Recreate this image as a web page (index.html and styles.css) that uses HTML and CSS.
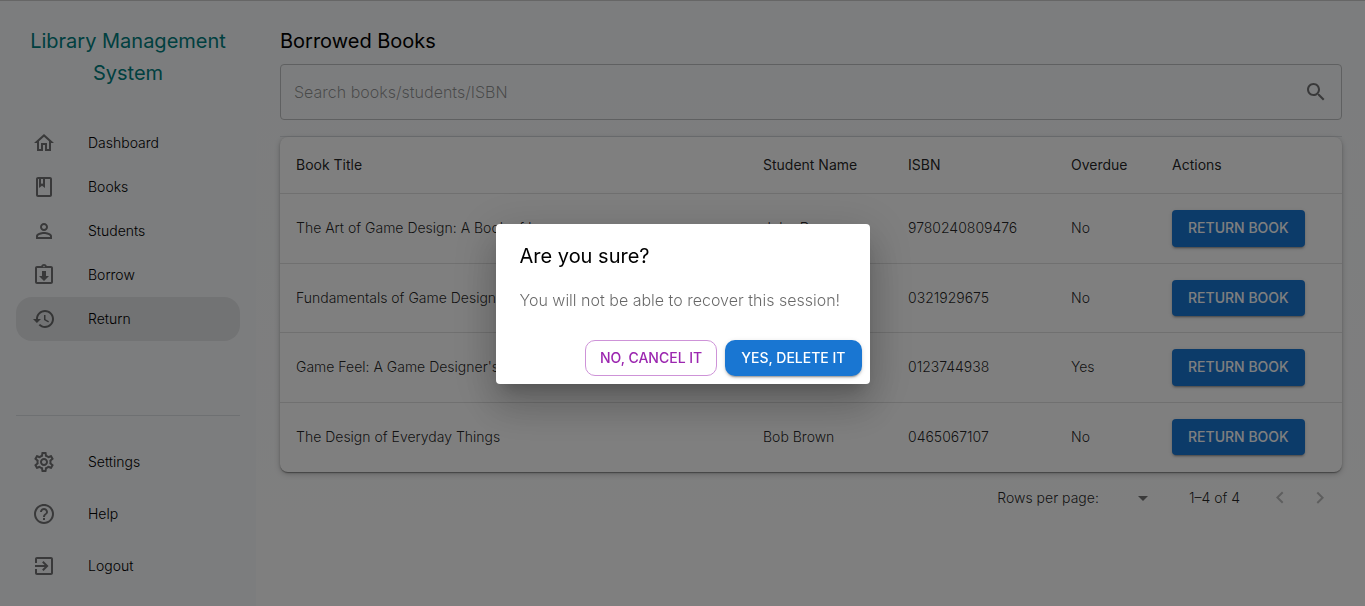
FILE: index.html
```html
<!DOCTYPE html>
<html lang="en">
<head>
<meta charset="utf-8">
<meta name="viewport" content="width=device-width, initial-scale=1">
<title>Library Management System</title>
<link rel="stylesheet" href="styles.css">
</head>
<body>
<div class="app">
  <aside class="sidebar">
    <h1 class="brand">Library Management System</h1>
    <nav class="nav" aria-label="Main">
      <a class="nav-item" href="#dashboard"><svg class="icon" viewBox="0 0 24 24" aria-hidden="true"><path d="M12 5.69l5 4.5V18h-2v-6H9v6H7v-7.81l5-4.5M12 3L2 12h3v8h6v-6h2v6h6v-8h3L12 3z"/></svg>Dashboard</a>
      <a class="nav-item" href="#books"><svg class="icon" viewBox="0 0 24 24" aria-hidden="true"><path d="M18 2H6c-1.1 0-2 .9-2 2v16c0 1.1.9 2 2 2h12c1.1 0 2-.9 2-2V4c0-1.1-.9-2-2-2zM9 4h2v5l-1-.75L9 9V4zm9 16H6V4h1v9l3-2.25L13 13V4h5v16z"/></svg>Books</a>
      <a class="nav-item" href="#students"><svg class="icon" viewBox="0 0 24 24" aria-hidden="true"><path d="M12 6c1.1 0 2 .9 2 2s-.9 2-2 2-2-.9-2-2 .9-2 2-2m0 9c2.7 0 5.8 1.29 6 2v1H6v-.99c.2-.72 3.3-2.01 6-2.01m0-11C9.79 4 8 5.79 8 8s1.79 4 4 4 4-1.79 4-4-1.79-4-4-4zm0 9c-2.67 0-8 1.34-8 4v3h16v-3c0-2.66-5.33-4-8-4z"/></svg>Students</a>
      <a class="nav-item" href="#borrow"><svg class="icon" viewBox="0 0 24 24" aria-hidden="true"><path d="M19 3h-4.18C14.4 1.84 13.3 1 12 1s-2.4.84-2.82 2H5c-1.1 0-2 .9-2 2v14c0 1.1.9 2 2 2h14c1.1 0 2-.9 2-2V5c0-1.1-.9-2-2-2zm-7-.25c.41 0 .75.34.75.75s-.34.75-.75.75-.75-.34-.75-.75.34-.75.75-.75zM19 19H5V5h14v14zm-7-1l5-5h-3V8h-4v5H7z"/></svg>Borrow</a>
      <a class="nav-item nav-item-active" href="#return" aria-current="page"><svg class="icon" viewBox="0 0 24 24" aria-hidden="true"><path d="M13 3c-4.97 0-9 4.03-9 9H1l3.89 3.89.07.14L9 12H6c0-3.87 3.13-7 7-7s7 3.13 7 7-3.13 7-7 7c-1.93 0-3.68-.79-4.94-2.06l-1.42 1.42C8.27 19.99 10.51 21 13 21c4.97 0 9-4.03 9-9s-4.03-9-9-9zm-1 5v5l4.28 2.54.72-1.21-3.5-2.08V8H12z"/></svg>Return</a>
    </nav>
    <nav class="nav nav-secondary" aria-label="Account">
      <a class="nav-item" href="#settings"><svg class="icon" viewBox="0 0 24 24" aria-hidden="true"><path d="M19.43 12.98c.04-.32.07-.64.07-.98 0-.34-.03-.66-.07-.98l2.11-1.65c.19-.15.24-.42.12-.64l-2-3.46c-.09-.16-.26-.25-.44-.25-.06 0-.12.01-.17.03l-2.49 1c-.52-.4-1.08-.73-1.69-.98l-.38-2.65C14.46 2.18 14.25 2 14 2h-4c-.25 0-.46.18-.49.42l-.38 2.65c-.61.25-1.17.59-1.69.98l-2.49-1c-.06-.02-.12-.03-.18-.03-.17 0-.34.09-.43.25l-2 3.46c-.13.22-.07.49.12.64l2.11 1.65c-.04.32-.07.65-.07.98 0 .33.03.66.07.98l-2.11 1.65c-.19.15-.24.42-.12.64l2 3.46c.09.16.26.25.44.25.06 0 .12-.01.17-.03l2.49-1c.52.4 1.08.73 1.69.98l.38 2.65c.03.24.24.42.49.42h4c.25 0 .46-.18.49-.42l.38-2.65c.61-.25 1.17-.59 1.69-.98l2.49 1c.06.02.12.03.18.03.17 0 .34-.09.43-.25l2-3.46c.12-.22.07-.49-.12-.64l-2.11-1.65zm-1.98-1.71c.04.31.05.52.05.73 0 .21-.02.43-.05.73l-.14 1.13.89.7 1.08.84-.7 1.21-1.27-.51-1.04-.42-.9.68c-.43.32-.84.56-1.25.73l-1.06.43-.16 1.13-.2 1.35h-1.4l-.19-1.35-.16-1.13-1.06-.43c-.43-.18-.83-.41-1.23-.71l-.91-.7-1.06.43-1.27.51-.7-1.21 1.08-.84.89-.7-.14-1.13c-.03-.31-.05-.54-.05-.74s.02-.43.05-.73l.14-1.13-.89-.7-1.08-.84.7-1.21 1.27.51 1.04.42.9-.68c.43-.32.84-.56 1.25-.73l1.06-.43.16-1.13.2-1.35h1.39l.19 1.35.16 1.13 1.06.43c.43.18.83.41 1.23.71l.91.7 1.06-.43 1.27-.51.7 1.21-1.07.85-.89.7.14 1.13zM12 8c-2.21 0-4 1.79-4 4s1.79 4 4 4 4-1.79 4-4-1.79-4-4-4zm0 6c-1.1 0-2-.9-2-2s.9-2 2-2 2 .9 2 2-.9 2-2 2z"/></svg>Settings</a>
      <a class="nav-item" href="#help"><svg class="icon" viewBox="0 0 24 24" aria-hidden="true"><path d="M11 18h2v-2h-2v2zm1-16C6.48 2 2 6.48 2 12s4.48 10 10 10 10-4.48 10-10S17.52 2 12 2zm0 18c-4.41 0-8-3.59-8-8s3.59-8 8-8 8 3.59 8 8-3.59 8-8 8zm0-14c-2.21 0-4 1.79-4 4h2c0-1.1.9-2 2-2s2 .9 2 2c0 2-3 1.75-3 5h2c0-2.25 3-2.5 3-5 0-2.21-1.79-4-4-4z"/></svg>Help</a>
      <a class="nav-item" href="#logout"><svg class="icon" viewBox="0 0 24 24" aria-hidden="true"><path d="M10.09 15.59L11.5 17l5-5-5-5-1.41 1.41L12.67 11H3v2h9.67l-2.58 2.59zM19 3H5c-1.11 0-2 .9-2 2v4h2V5h14v14H5v-4H3v4c0 1.1.89 2 2 2h14c1.1 0 2-.9 2-2V5c0-1.1-.9-2-2-2z"/></svg>Logout</a>
    </nav>
  </aside>
  <main class="main">
    <h2 class="title">Borrowed Books</h2>
    <div class="search">
      <input class="search-input" type="text" placeholder="Search books/students/ISBN" aria-label="Search books/students/ISBN">
      <svg class="icon" viewBox="0 0 24 24" aria-hidden="true"><path d="M15.5 14h-.79l-.28-.27C15.41 12.59 16 11.11 16 9.5 16 5.91 13.09 3 9.5 3S3 5.91 3 9.5 5.91 16 9.5 16c1.61 0 3.09-.59 4.23-1.57l.27.28v.79l5 4.99L20.49 19l-4.99-5zm-6 0C7.01 14 5 11.99 5 9.5S7.01 5 9.5 5 14 7.01 14 9.5 11.99 14 9.5 14z"/></svg>
    </div>
    <div class="results">
      <div class="paper">
        <table class="table">
          <colgroup><col><col class="col-student"><col class="col-isbn"><col class="col-overdue"><col class="col-actions"></colgroup>
          <thead>
            <tr><th scope="col">Book Title</th><th scope="col">Student Name</th><th scope="col">ISBN</th><th scope="col">Overdue</th><th scope="col">Actions</th></tr>
          </thead>
          <tbody>
            <tr><td>The Art of Game Design: A Book of Lenses</td><td>John Doe</td><td>9780240809476</td><td>No</td><td><button class="button button-primary" type="button">Return book</button></td></tr>
            <tr><td>Fundamentals of Game Design</td><td></td><td>0321929675</td><td>No</td><td><button class="button button-primary" type="button">Return book</button></td></tr>
            <tr><td>Game Feel: A Game Designer's</td><td></td><td>0123744938</td><td>Yes</td><td><button class="button button-primary" type="button">Return book</button></td></tr>
            <tr><td>The Design of Everyday Things</td><td>Bob Brown</td><td>0465067107</td><td>No</td><td><button class="button button-primary" type="button">Return book</button></td></tr>
          </tbody>
        </table>
      </div>
      <div class="pagination">
        <label for="rows">Rows per page:</label>
        <span class="rows">
          <select class="rows-select" id="rows"><option value=""></option></select>
          <svg class="icon rows-caret" viewBox="0 0 24 24" aria-hidden="true"><path d="M7 10l5 5 5-5z"/></svg>
        </span>
        <span class="range">1–4 of 4</span>
        <button class="page-button" type="button" aria-label="Previous page" disabled><svg class="icon" viewBox="0 0 24 24" aria-hidden="true"><path d="M15.41 16.09l-4.58-4.59 4.58-4.59L14 5.5l-6 6 6 6z"/></svg></button>
        <button class="page-button" type="button" aria-label="Next page" disabled><svg class="icon" viewBox="0 0 24 24" aria-hidden="true"><path d="M8.59 16.34l4.58-4.59-4.58-4.59L10 5.75l6 6-6 6z"/></svg></button>
      </div>
    </div>
  </main>
</div>
<div class="backdrop">
  <div class="dialog" role="dialog" aria-modal="true" aria-labelledby="dialog-title">
    <h2 class="dialog-title" id="dialog-title">Are you sure?</h2>
    <p class="dialog-text">You will not be able to recover this session!</p>
    <div class="dialog-actions">
      <button class="button button-outlined button-round" type="button">No, cancel it</button>
      <button class="button button-primary button-round" type="button">Yes, delete it</button>
    </div>
  </div>
</div>
</body>
</html>
```

FILE: styles.css
```css
* {
  box-sizing: border-box;
}

body {
  margin: 0;
  font-family: Inter, "Liberation Sans", sans-serif;
  font-size: 14px;
  font-weight: 300;
  line-height: 20px;
  color: rgba(0, 0, 0, 0.87);
}

.app {
  display: flex;
  min-height: 100vh;
  border-top: 1px solid #cccccc;
  background: linear-gradient(#f8fafc, #ffffff);
}

.icon {
  width: 24px;
  height: 24px;
  flex: none;
  fill: rgba(0, 0, 0, 0.54);
}

.sidebar {
  flex: none;
  width: 256px;
  padding: 24px 16px 16px;
  background: #f8fafc;
}

.brand {
  margin: 0 0 32px;
  font-size: 20px;
  font-weight: 400;
  line-height: 32px;
  text-align: center;
  color: #008080;
}

.nav-item {
  display: flex;
  align-items: center;
  gap: 32px;
  height: 44px;
  padding: 0 16px;
  border-radius: 16px;
  color: #000000;
  text-decoration: none;
}

.nav-item-active {
  background: #e4e6e8;
}

.nav-secondary {
  display: grid;
  gap: 8px;
  margin-top: 74px;
  padding-top: 24px;
  border-top: 1px solid #dde0e4;
}

.main {
  flex: 1;
  min-width: 0;
  padding: 24px 23px 16px 24px;
}

.title {
  margin: 0 0 7px;
  font-size: 20px;
  font-weight: 400;
  line-height: 32px;
  color: #000000;
}

.search {
  display: flex;
  align-items: center;
  height: 56px;
  padding: 0 13px;
  border: 1px solid #bfc1c2;
  border-radius: 4px;
}

.search-input {
  flex: 1;
  min-width: 0;
  padding: 0;
  border: 0;
  background: none;
  font: inherit;
  font-size: 16px;
}

.search-input::placeholder {
  color: rgba(0, 0, 0, 0.42);
}

.results {
  margin-top: 16px;
  border-top: 1px solid #dde0e4;
}

.paper {
  border-radius: 8px;
  background: #ffffff;
  box-shadow: 0 2px 1px -1px rgba(0, 0, 0, 0.2), 0 1px 1px rgba(0, 0, 0, 0.14), 0 1px 3px rgba(0, 0, 0, 0.12), 0 2px 6px rgba(0, 0, 0, 0.2);
}

.table {
  width: 100%;
  table-layout: fixed;
  border-collapse: separate;
  border-spacing: 0;
}

.col-student {
  width: 145px;
}

.col-isbn {
  width: 163px;
}

.col-overdue {
  width: 101px;
}

.col-actions {
  width: 186px;
}

.table th,
.table td {
  padding: 16px;
  border-bottom: 1px solid #e0e0e0;
  text-align: left;
}

.table th {
  font-weight: 400;
  line-height: 24px;
}

.table tbody tr:last-child td {
  border-bottom-color: transparent;
}

.button {
  padding: 6px 16px;
  border: 0;
  border-radius: 4px;
  font: inherit;
  font-weight: 500;
  line-height: 1.75;
  text-transform: uppercase;
  white-space: nowrap;
}

.button-primary {
  background: #1976d2;
  color: #ffffff;
  box-shadow: 0 3px 1px -2px rgba(0, 0, 0, 0.2), 0 2px 2px rgba(0, 0, 0, 0.14), 0 1px 5px rgba(0, 0, 0, 0.12);
}

.button-outlined {
  padding: 5px 14px;
  border: 1px solid #ce93d8;
  background: transparent;
  color: #9c27b0;
}

.button-round {
  border-radius: 10px;
}

.table .button {
  display: block;
}

.pagination {
  display: flex;
  justify-content: flex-end;
  align-items: center;
  height: 52px;
  padding-right: 2px;
}

.rows {
  position: relative;
  display: flex;
  width: 48px;
  margin: 0 34px 0 8px;
}

.rows-select {
  width: 100%;
  height: 24px;
  border: 0;
  background: none;
  appearance: none;
  font: inherit;
}

.rows-caret {
  position: absolute;
  top: 0;
  right: 0;
  pointer-events: none;
}

.range {
  margin-right: 20px;
}

.page-button {
  display: flex;
  padding: 8px;
  border: 0;
  background: none;
}

.page-button .icon {
  fill: rgba(0, 0, 0, 0.26);
}

.backdrop {
  position: fixed;
  inset: 0;
  display: flex;
  align-items: center;
  justify-content: center;
  padding-top: 2px;
  background: rgba(0, 0, 0, 0.5);
}

.dialog {
  min-width: 374px;
  border-radius: 4px;
  background: #ffffff;
  box-shadow: 0 11px 15px -7px rgba(0, 0, 0, 0.2), 0 24px 38px 3px rgba(0, 0, 0, 0.14), 0 9px 46px 8px rgba(0, 0, 0, 0.12);
}

.dialog-title {
  margin: 0;
  padding: 16px 24px;
  font-size: 20px;
  font-weight: 400;
  line-height: 32px;
  color: #000000;
}

.dialog-text {
  margin: 0;
  padding: 0 24px 20px;
  font-size: 16px;
  line-height: 24px;
  color: rgba(0, 0, 0, 0.6);
}

.dialog-actions {
  display: flex;
  justify-content: flex-end;
  gap: 8px;
  padding: 8px;
}
```
